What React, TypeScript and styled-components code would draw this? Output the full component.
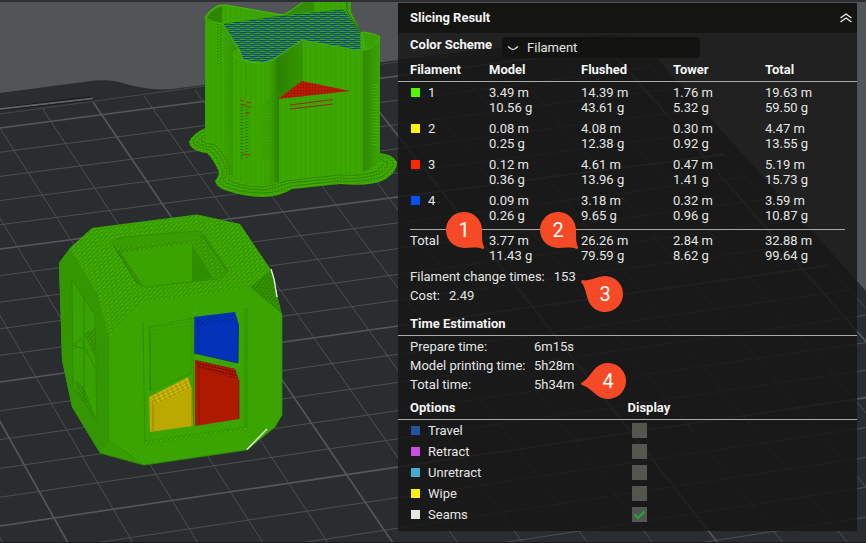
import React, { useState } from "react";
import styled, { createGlobalStyle } from "styled-components";

const GlobalStyle = createGlobalStyle`
  *, *::before, *::after { box-sizing: border-box; }
  body {
    margin: 0;
    background: #2a2d30;
    color: #e6e6e6;
    font-family: Roboto, "Liberation Sans", sans-serif;
    font-size: 13px;
    line-height: 16px;
  }
`;

const Workspace = styled.main`
  position: relative;
  display: flex;
  justify-content: flex-end;
  align-items: flex-start;
  min-height: 100vh;
  padding: 3px 9px 12px 0;
  overflow: hidden;
`;

const Scene = styled.svg`
  position: absolute;
  inset: 0;
  width: 100%;
  height: 100%;
`;

const Panel = styled.section`
  position: relative;
  width: 53vw;
  padding-bottom: 6px;
  background: rgba(20, 20, 19, 0.8);
`;

const PanelHeader = styled.header`
  display: flex;
  align-items: center;
  justify-content: space-between;
  height: 30px;
  padding: 0 4px 0 12px;
  background: #141412;
`;

const Title = styled.h1`
  margin: 0;
  color: #f4f4f4;
  font-size: 13px;
  font-weight: 700;
`;

const CollapseButton = styled.button`
  display: flex;
  padding: 0;
  border: 0;
  background: none;
  color: #f0f0f0;
  cursor: pointer;
`;

const SchemeRow = styled.div`
  display: flex;
  align-items: flex-start;
  gap: 8px;
  padding: 4px 12px 0;
`;

const SchemeLabel = styled.label`
  flex: 0 0 84px;
  color: #f4f4f4;
  font-weight: 700;
`;

const SelectBox = styled.div`
  display: grid;
  flex: 0 1 198px;
  align-items: center;
  color: #e6e6e6;

  > * {
    grid-area: 1 / 1;
  }
  > svg {
    margin-left: 5px;
    pointer-events: none;
  }
`;

const Select = styled.select`
  width: 100%;
  height: 21px;
  padding: 0 0 0 25px;
  border: 0;
  border-radius: 4px;
  appearance: none;
  background: #131312;
  color: inherit;
  font: inherit;
`;

const Table = styled.table`
  width: 100%;
  border-collapse: separate;
  border-spacing: 0;
  table-layout: fixed;
`;

const FirstColumn = styled.col`
  width: 91px;
`;

const HeadCell = styled.th`
  padding: 4px 0 3px;
  border-bottom: 1px solid #a9aaa9;
  color: #f4f4f4;
  font-weight: 700;
  text-align: left;

  &:first-child {
    padding-left: 12px;
  }
`;

const UsageCell = styled.td`
  padding: 3px 0;
  line-height: 15px;
  vertical-align: top;

  tr:last-child > & {
    padding-bottom: 6px;
  }
`;

const UsageName = styled.th`
  padding: 3px 0 3px 12px;
  font-weight: 400;
  line-height: 15px;
  text-align: left;
  vertical-align: top;
`;

const TotalSection = styled.tfoot`
  background: linear-gradient(#a3aaa5, #a3aaa5) 12px 0 / calc(100% - 24px) 1px no-repeat;

  && td,
  && th {
    padding-top: 4px;
    padding-bottom: 0;
  }
`;

const Tagged = styled.span`
  display: flex;
  align-items: center;
  gap: 8px;
  padding-left: 1px;
`;

const Swatch = styled.span<{ $color: string }>`
  width: 9px;
  height: 9px;
  background: ${(p) => p.$color};
`;

const Summary = styled.div`
  padding: 4px 12px 0;
  line-height: 19px;
`;

const SummaryLine = styled.div`
  display: flex;
  gap: 9px;
`;

const SectionTitle = styled.h2`
  margin: 11px 0 0;
  padding: 0 12px 3px;
  border-bottom: 1px solid #a9aaa9;
  color: #f4f4f4;
  font-size: 13px;
  font-weight: 700;
`;

const TimeList = styled.dl`
  display: grid;
  grid-template-columns: 124px 1fr;
  margin: 0;
  padding: 1px 12px 2px;
  line-height: 19px;
`;

const TimeLabel = styled.dt`
  white-space: nowrap;
`;

const TimeValue = styled.dd`
  margin: 0;
`;

const OptionCell = styled.td`
  height: 21px;
  padding: 0;

  &:first-child {
    padding-left: 12px;
  }
`;

const CheckSlot = styled.span`
  display: grid;
  justify-content: start;
  padding-left: 4px;

  > * {
    grid-area: 1 / 1;
  }
  > svg {
    pointer-events: none;
  }
`;

const CheckBox = styled.input`
  width: 15px;
  height: 15px;
  margin: 0;
  appearance: none;
  background: #545651;
`;

const Pin = styled.div<{ $x: number; $y: number }>`
  position: absolute;
  left: ${(p) => p.$x}px;
  top: ${(p) => p.$y}px;
  display: grid;
  place-items: center;
  width: 56px;
  height: 56px;
  color: #ffffff;
  font-size: 20px;
  font-weight: 400;
  line-height: 24px;

  > * {
    grid-area: 1 / 1;
  }
  > span {
    z-index: 1;
  }
`;

const usage = [
  { id: "1", color: "#55f500", cells: [["3.49 m", "10.56 g"], ["14.39 m", "43.61 g"], ["1.76 m", "5.32 g"], ["19.63 m", "59.50 g"]] },
  { id: "2", color: "#fff200", cells: [["0.08 m", "0.25 g"], ["4.08 m", "12.38 g"], ["0.30 m", "0.92 g"], ["4.47 m", "13.55 g"]] },
  { id: "3", color: "#ff2600", cells: [["0.12 m", "0.36 g"], ["4.61 m", "13.96 g"], ["0.47 m", "1.41 g"], ["5.19 m", "15.73 g"]] },
  { id: "4", color: "#0050ff", cells: [["0.09 m", "0.26 g"], ["3.18 m", "9.65 g"], ["0.32 m", "0.96 g"], ["3.59 m", "10.87 g"]] },
];

const totals = [["3.77 m", "11.43 g"], ["26.26 m", "79.59 g"], ["2.84 m", "8.62 g"], ["32.88 m", "99.64 g"]];

const times = [
  ["Prepare time:", "6m15s"],
  ["Model printing time:", "5h28m"],
  ["Total time:", "5h34m"],
];

const options = [
  { name: "Travel", color: "#2153a0" },
  { name: "Retract", color: "#cb50df" },
  { name: "Unretract", color: "#3cafd2" },
  { name: "Wipe", color: "#fff200" },
  { name: "Seams", color: "#e6e6e4" },
];

const pins = [
  { label: "1", x: 38, y: 199, angle: 43 },
  { label: "2", x: 132, y: 199, angle: 43 },
  { label: "3", x: 179, y: 263, angle: 209 },
  { label: "4", x: 182, y: 350, angle: 174 },
];

type Line = { x1: number; y1: number; x2: number; y2: number; bold: boolean };

/* Rows of the bed grid: height at the left edge and 398 units further right. */
const rowAnchors = [
  [128, 76],
  [249, 197],
  [382, 326],
  [526, 467],
  [682, 620],
];

const rows: Line[] = rowAnchors.slice(0, -1).flatMap(([left, right], i) => {
  const [nextLeft, nextRight] = rowAnchors[i + 1];
  return [0, 1, 2, 3, 4].map((k) => {
    const a = left + ((nextLeft - left) * k) / 5;
    const b = right + ((nextRight - right) * k) / 5;
    return { x1: 0, y1: a, x2: 866, y2: a + ((b - a) * 866) / 398, bold: k === 0 };
  });
});

const columns: Line[] = Array.from({ length: 22 }, (_, i) => {
  const k = i - 5;
  return { x1: 42 + 51 * k, y1: 108 - 6 * k, x2: 328 + 65 * k, y2: 543, bold: (k + 4) % 5 === 0 };
});

function Bed() {
  return (
    <g>
      <rect width="866" height="543" fill="#525558" />
      <path
        d="M0 93 L95 80.500 Q113 79 126 84 Q150 91 172 89 L398 60 L590 37 Q630 31 645 45 L739 150 L809 228 L866 291 V543 H0 Z"
        fill="#2a2d30"
      />
      <g clipPath="url(#bedArea)">
        {[...rows, ...columns].map((l, i) => (
          <line
            key={i}
            x1={l.x1}
            y1={l.y1}
            x2={l.x2}
            y2={l.y2}
            stroke={l.bold ? "#55585b" : "#4c4f52"}
            strokeWidth={l.bold ? 1.6 : 1}
          />
        ))}
      </g>
      <path d="M0 114 L205 86 L398 62 L622 36 L646 60 L716 145 L866 308" fill="none" stroke="#44474a" />
      <path d="M0 107.500 L88 96.500 L94 98 L90 100 L0 110 Z" fill="#17191a" />
      <path d="M0 109 L93 98.500" stroke="#606263" strokeWidth="2" />
      <path d="M0 110.500 L93 100" stroke="#1b1d1e" />
    </g>
  );
}

const brimShape =
  "M207 127 Q192 134 189 142 Q190 151 207 153 Q214 160 219 172 Q219 176 215 181 Q217 189 231 192 Q246 197 264 197 Q281 196 292 189 L340 184 Q372 187 386 179 Q398 170 397 162 Q393 154 379 153 L300 130 Z";
const towerShape =
  "M205 18 Q208 11 218 5.500 L226 5 L283 15 Q290 12 303 2 H351 V12 L361 32 Q374 33 380 37 V160 Q374 168 363 172 L330 175 L282 181 Q262 186 246 183 L233 178 L230 158 L216 143 L205 136 Z";
const infillShape = "M223 24 L283 15.500 L343 9.500 L361 32 V51 L302 40 L272 60 L262 63 L243 60 L239 49 Z";
const topShape = "M70 248 L92 228 L197 214.500 L240 224 L271 270 L250 287 L140 303 L109 337 L98 295 Z";

function TowerModel() {
  return (
    <g>
      <path d={brimShape} fill="#3da800" />
      <path d={brimShape} fill="url(#dots)" opacity="0.700" />
      <g fill="none" stroke="#2a7a00" strokeWidth="0.700">
        <path d="M207 130 Q195 136 193 142 Q195 148 210 150 Q218 158 223 172 Q223 176 219 181 Q221 186 233 189 Q246 193 264 193 Q279 192 291 186 L340 181 Q370 183 383 176 Q394 168 393 163 Q391 157 380 156" />
        <path d="M207 134 Q199 138 197 142 Q200 146 212 147 Q222 156 227 172 Q227 176 223 180 Q226 184 235 186 Q247 190 263 190 Q278 188 289 183 L340 178 Q367 180 380 173 Q389 166 388 163 L380 159" />
        <path d="M206 137 Q202 140 201 141 Q205 144 215 145 Q226 156 230 170 L229 180 Q240 187 262 187 Q277 185 287 181 L340 175 Q364 177 377 171 L384 164" />
      </g>
      <path d={towerShape} fill="#3ca600" />
      <path d={towerShape} fill="url(#ribs)" />
      <path d="M207 18 Q210 11 222 6 L222 23 Q213 23 207 20 Z" fill="#2d8500" />
      <path d="M302 2 L314 2 L314 11 L283 15 Z" fill="#318c00" />
      <path d="M222 24 L238 50 L233 56 V178 L222 160 Z" fill="url(#wallShade)" />
      <path d={infillShape} fill="#1f6f35" />
      <path d={infillShape} fill="url(#infill)" />
      <path d="M239 49 L243 60 L262 63 L272 60 L302 40 L361 51 V32 L346 12" fill="none" stroke="#43b403" />
      <path d="M206 18 Q213 23 223 24 L239 49 Q233 51 233 55 Q240 62 264 64" fill="none" stroke="#45b605" />
      <path d="M205 18 Q208 11 218 5.500 L226 5 L283 15 Q290 12 303 2" fill="none" stroke="#49bd08" />
      <path d="M272 61 L302 41 V82 L279 98 V182 L265 184 V63 Z" fill="url(#recess)" />
      <path d="M302 41 V82" stroke="#318c00" />
      <path d="M363 51 Q374 48 380 38 V160 Q374 168 363 172 Z" fill="url(#columnShade)" />
      <path d="M362 32 L365 50 Q376 47 380 37 Q374 33 362 32" fill="#3a9f00" stroke="#45b506" />
      <path d="M347 2 L347 12 L361 32" fill="none" stroke="#226600" />
      <path d="M278 99 L302 81 L350 91 Z" fill="#b51b00" />
      <path d="M278 99 L302 81 L350 91 Z" fill="url(#redDots)" />
      <path d="M290 105 L333 99.500 M290 109 L333 104" stroke="#9b2506" strokeWidth="1.200" />
      <g stroke="#237000" strokeDasharray="1 2">
        <path d="M218 24 V65 M221 26 V64" />
        <path d="M229 78 V135 M246 64 V100 M264 105 V162 M268 100 V160 M273 92 V160" opacity="0.500" />
        <path d="M242 104 V160 M247 106 V160" strokeWidth="3" opacity="0.800" />
        <path d="M375 84 V146" strokeWidth="5" stroke="#4fc40c" opacity="0.500" />
      </g>
      <path d="M240 100 L244 101 M246 102 L251 103 M242 105 H246 M247 107 L251 107 M245 113 H250 M243 154 L250 155" stroke="#a12a05" />
    </g>
  );
}

function CubeModel() {
  return (
    <g>
      <path
        d="M92 228 L197 214.500 L240 224 L271 270 L282 315 V415 L275 427 L247 450 L144 465 L100 453 L72 407 L62 360 L59 263 L70 248 Z"
        fill="#3ca700"
      />
      <path d="M109 337 L140 303 L250 287 L282 315 V415 L275 427 L247 450 L144 465 L109 440 Z" fill="url(#frontGrain)" />
      <path d={topShape} fill="url(#weave)" />
      <path d="M250 287 L271 270 L281 313 Z" fill="#359900" />
      <path d="M250 287 L271 270 L281 313 Z" fill="url(#fine)" />
      <path d="M70 248 L98 295 L109 337 V440 L100 453 L72 407 L62 360 L59 263 Z" fill="#349600" />
      <path d="M72 280 L95 315 L97 421 L73 387 Z" fill="#39a100" stroke="#2f8b00" />
      <path d="M84 297 V402 M72 345 L84 349" stroke="#2d8600" fill="none" />
      <path d="M72 347 L81 339 L95 368" fill="none" stroke="#2f8a00" />
      <path d="M84 334 L95 328 V358 Z M75 380 L84 387 L97 421 L78 393 Z" fill="url(#fine)" />
      <path d="M109 440 L144 465 L100 453 Z" fill="#379d00" stroke="#2e8900" strokeWidth="0.500" />

      <path d="M112 243 Q112 240 124 237 L197 231 Q202 232 205 236 L228 270 Q228 274 218 279 L145 287 Q140 287 136 282 Z" fill="#389d00" stroke="#2f8800" strokeWidth="0.800" />
      <path d="M121 253 L192 243 L213 278 L145 287 Z" fill="#3aa300" />
      <path d="M192 244 V282 L213 278 Z" fill="#2f8e00" />
      <path d="M118 247 L192 240 L194 244 L121 253 Z M192 240 L200 234 L225 273 L215 278 Z" fill="url(#weave)" />
      <path d="M114 246 L138 284 M119 251 L142 286 M202 235 L227 271" stroke="#286f00" strokeDasharray="2 1" fill="none" />

      <path d="M143 322 L145 445 M247 308 V428" stroke="#318f00" />
      <path d="M245 309 V427" stroke="#369b00" strokeWidth="2" />
      <path d="M145 440 L247 426 V430 L145 445 Z" fill="url(#weave)" />
      <path d="M149 327 L192 318 V373 L151 391 Z" fill="#38a200" stroke="#318e00" strokeWidth="0.700" />
      <path d="M150 328 L191 319 V325 L152 333 Z" fill="url(#dots)" opacity="0.600" />
      <path d="M150 329 V391" stroke="#318f00" strokeWidth="2" />

      <path d="M194 317 L235 312 L239 325 L238 363 L194 353 Z" fill="#0233b8" />
      <path d="M194 317 L235 312 L238 321 L197 327 Z" fill="url(#blueDots)" />
      <path d="M194 353 L238 363 V325 M198 319 V353" fill="none" stroke="#001f85" strokeWidth="0.700" />
      <path d="M195 360 L235 369 L239 380 V419 L195 426 Z" fill="#ad1a00" />
      <path d="M195 360 L235 369 L239 379 L198 369 Z" fill="url(#redRows)" />
      <path d="M199 364 V425 M239 380 V419" stroke="#851200" strokeWidth="0.700" />
      <path d="M149 397 L188 377 L192 390 L193 426 L150 432 Z" fill="#bba800" />
      <path d="M150 398 L188 378 L191 388 L153 406 Z" fill="url(#yellowRows)" />
      <path d="M153 400 V431 M192 390 V426" stroke="#827300" strokeWidth="0.700" />
      <path d="M194 315 L193.500 426" stroke="#2f8d00" strokeWidth="0.800" />

      <path d="M282 315 V415 L275 427 L247 450 L144 465 L100 453" fill="none" stroke="#2f8a00" strokeWidth="0.800" />
      <path d="M271 269 L274 279 L277 297 M267 429 L247 449.500" fill="none" stroke="#e7ece3" strokeWidth="1.400" />
    </g>
  );
}

function SceneDefs() {
  return (
    <defs>
      <clipPath id="bedArea">
        <path d="M0 114 L205 87 L398 62 L622 36 L646 60 L716 145 L866 308 V543 H0 Z" />
      </clipPath>
      <pattern id="ribs" width="5" height="200" patternUnits="userSpaceOnUse">
        <rect width="1" height="200" fill="#349600" opacity="0.400" />
        <rect x="3" width="1" height="200" fill="#42ae03" opacity="0.300" />
      </pattern>
      <pattern id="dots" width="3" height="3" patternUnits="userSpaceOnUse" patternTransform="rotate(-8)">
        <rect width="1.200" height="0.800" fill="#2a7400" />
        <rect x="1.500" y="1.500" width="1" height="0.800" fill="#52c80d" />
      </pattern>
      <pattern id="weave" width="5" height="4" patternUnits="userSpaceOnUse" patternTransform="rotate(-8)">
        <path d="M0 3.500 L1.800 1.500 M2.500 1.500 L4 0" stroke="#297000" strokeWidth="0.800" />
        <path d="M2 3.500 L4 1.800" stroke="#4cc207" strokeWidth="0.800" />
      </pattern>
      <pattern id="fine" width="3" height="2" patternUnits="userSpaceOnUse" patternTransform="rotate(38)">
        <rect width="2" height="0.800" fill="#226500" />
      </pattern>
      <pattern id="frontGrain" width="4" height="3" patternUnits="userSpaceOnUse" patternTransform="rotate(40)">
        <rect width="4" height="1" fill="#379d00" opacity="0.700" />
      </pattern>
      <pattern id="infill" width="10" height="4" patternUnits="userSpaceOnUse">
        <rect width="6" height="1" fill="#0b3dab" />
        <rect x="6" width="4" height="1" fill="#1a5f4c" />
        <rect y="1" width="5" height="1" fill="#2f8c12" />
        <rect x="5" y="1" width="5" height="1" fill="#3ea908" />
        <rect x="4" y="2" width="6" height="1" fill="#0b3dab" />
        <rect y="2" width="4" height="1" fill="#1a5f4c" />
        <rect y="3" width="5" height="1" fill="#3ea908" />
        <rect x="5" y="3" width="5" height="1" fill="#2f8c12" />
      </pattern>
      <pattern id="redDots" width="3" height="3" patternUnits="userSpaceOnUse">
        <rect width="1" height="1" fill="#801000" />
      </pattern>
      <pattern id="redRows" width="3" height="3" patternUnits="userSpaceOnUse" patternTransform="rotate(13)">
        <rect width="2" height="1.200" fill="#5f0800" />
      </pattern>
      <pattern id="blueDots" width="5" height="4" patternUnits="userSpaceOnUse" patternTransform="rotate(-8)">
        <rect width="1.300" height="1" fill="#001a63" />
        <rect x="2.500" y="2" width="1" height="1" fill="#001f78" />
      </pattern>
      <pattern id="yellowRows" width="5" height="3" patternUnits="userSpaceOnUse" patternTransform="rotate(-26)">
        <rect width="3" height="0.800" fill="#e2cd0b" />
        <rect x="3" y="1.500" width="1.500" height="0.800" fill="#786a00" />
      </pattern>
      <linearGradient id="wallShade">
        <stop offset="0" stopColor="#338f00" stopOpacity="0" />
        <stop offset="1" stopColor="#339200" />
      </linearGradient>
      <linearGradient id="recess">
        <stop offset="0" stopColor="#3ba400" stopOpacity="0" />
        <stop offset="0.350" stopColor="#2c8200" />
        <stop offset="1" stopColor="#349500" />
      </linearGradient>
      <linearGradient id="columnShade">
        <stop offset="0" stopColor="#2f8900" />
        <stop offset="1" stopColor="#3ba400" />
      </linearGradient>
    </defs>
  );
}

function Marker({ label, x, y, angle }: { label: string; x: number; y: number; angle: number }) {
  return (
    <Pin $x={x} $y={y}>
      <svg width="56" height="56" viewBox="-28 -28 56 56" aria-hidden="true">
        <path
          transform={`rotate(${angle})`}
          d="M12.700 12.700 C18 7.500 21 3.500 25.500 1.500 A1.500 1.500 0 0 0 25.500 -1.500 C21 -3.500 18 -7.500 12.700 -12.700 A18 18 0 1 0 12.700 12.700 Z"
          fill="#f64a26"
        />
      </svg>
      <span>{label}</span>
    </Pin>
  );
}

export default function App() {
  const [shown, setShown] = useState<string[]>(["Seams"]);
  const [open, setOpen] = useState(true);
  const toggle = (name: string) =>
    setShown((list) => (list.includes(name) ? list.filter((n) => n !== name) : [...list, name]));

  return (
    <>
      <GlobalStyle />
      <Workspace>
        <Scene viewBox="0 0 866 543" preserveAspectRatio="xMinYMin slice" aria-hidden="true">
          <SceneDefs />
          <Bed />
          <TowerModel />
          <CubeModel />
          <rect width="866" height="2" fill="#2f2e33" />
          <rect y="542" width="866" height="1" fill="#1d1d20" />
        </Scene>
        <Panel>
          <PanelHeader>
            <Title>Slicing Result</Title>
            <CollapseButton type="button" aria-label="Collapse" aria-expanded={open} onClick={() => setOpen(!open)}>
              <svg width="14" height="12" viewBox="0 0 14 12" fill="none" stroke="currentColor" strokeWidth="1.300">
                <path d="M1.500 6 L7 2 L12.500 6 M1.500 10 L7 6 L12.500 10" />
              </svg>
            </CollapseButton>
          </PanelHeader>
          {open && (
            <>
              <SchemeRow>
                <SchemeLabel htmlFor="scheme">Color Scheme</SchemeLabel>
                <SelectBox>
                  <Select id="scheme" defaultValue="Filament">
                    <option>Filament</option>
                  </Select>
                  <svg width="12" height="6" viewBox="0 0 12 6" fill="none" stroke="currentColor" strokeWidth="1.300">
                    <path d="M1 1.500 L4 3.700 Q6 5 8 3.700 L11 1.500" />
                  </svg>
                </SelectBox>
              </SchemeRow>
              <Table>
                <colgroup>
                  <FirstColumn />
                  <col span={4} />
                </colgroup>
                <thead>
                  <tr>
                    {["Filament", "Model", "Flushed", "Tower", "Total"].map((h) => (
                      <HeadCell key={h} scope="col">{h}</HeadCell>
                    ))}
                  </tr>
                </thead>
                <tbody>
                  {usage.map((row) => (
                    <tr key={row.id}>
                      <UsageName scope="row">
                        <Tagged>
                          <Swatch $color={row.color} />
                          {row.id}
                        </Tagged>
                      </UsageName>
                      {row.cells.map(([length, weight]) => (
                        <UsageCell key={length}>
                          <div>{length}</div>
                          <div>{weight}</div>
                        </UsageCell>
                      ))}
                    </tr>
                  ))}
                </tbody>
                <TotalSection>
                  <tr>
                    <UsageName scope="row">Total</UsageName>
                    {totals.map(([length, weight]) => (
                      <UsageCell key={length}>
                        <div>{length}</div>
                        <div>{weight}</div>
                      </UsageCell>
                    ))}
                  </tr>
                </TotalSection>
              </Table>
              <Summary>
                <SummaryLine>
                  <span>Filament change times:</span>
                  <span>153</span>
                </SummaryLine>
                <SummaryLine>
                  <span>Cost:</span>
                  <span>2.49</span>
                </SummaryLine>
              </Summary>
              <SectionTitle>Time Estimation</SectionTitle>
              <TimeList>
                {times.map(([label, value]) => (
                  <React.Fragment key={label}>
                    <TimeLabel>{label}</TimeLabel>
                    <TimeValue>{value}</TimeValue>
                  </React.Fragment>
                ))}
              </TimeList>
              <Table>
                <thead>
                  <tr>
                    <HeadCell scope="col">Options</HeadCell>
                    <HeadCell scope="col">Display</HeadCell>
                  </tr>
                </thead>
                <tbody>
                  {options.map(({ name, color }) => (
                    <tr key={name}>
                      <OptionCell>
                        <Tagged>
                          <Swatch $color={color} />
                          <label htmlFor={`show-${name}`}>{name}</label>
                        </Tagged>
                      </OptionCell>
                      <OptionCell>
                        <CheckSlot>
                          <CheckBox
                            id={`show-${name}`}
                            type="checkbox"
                            checked={shown.includes(name)}
                            onChange={() => toggle(name)}
                          />
                          {shown.includes(name) && (
                            <svg width="15" height="15" viewBox="0 0 15 15" fill="none" stroke="#27a935" strokeWidth="1.800">
                              <path d="M2.500 7.500 L6 11 L12.500 4.500" />
                            </svg>
                          )}
                        </CheckSlot>
                      </OptionCell>
                    </tr>
                  ))}
                </tbody>
              </Table>
              {pins.map((pin) => (
                <Marker key={pin.label} {...pin} />
              ))}
            </>
          )}
        </Panel>
      </Workspace>
    </>
  );
}
